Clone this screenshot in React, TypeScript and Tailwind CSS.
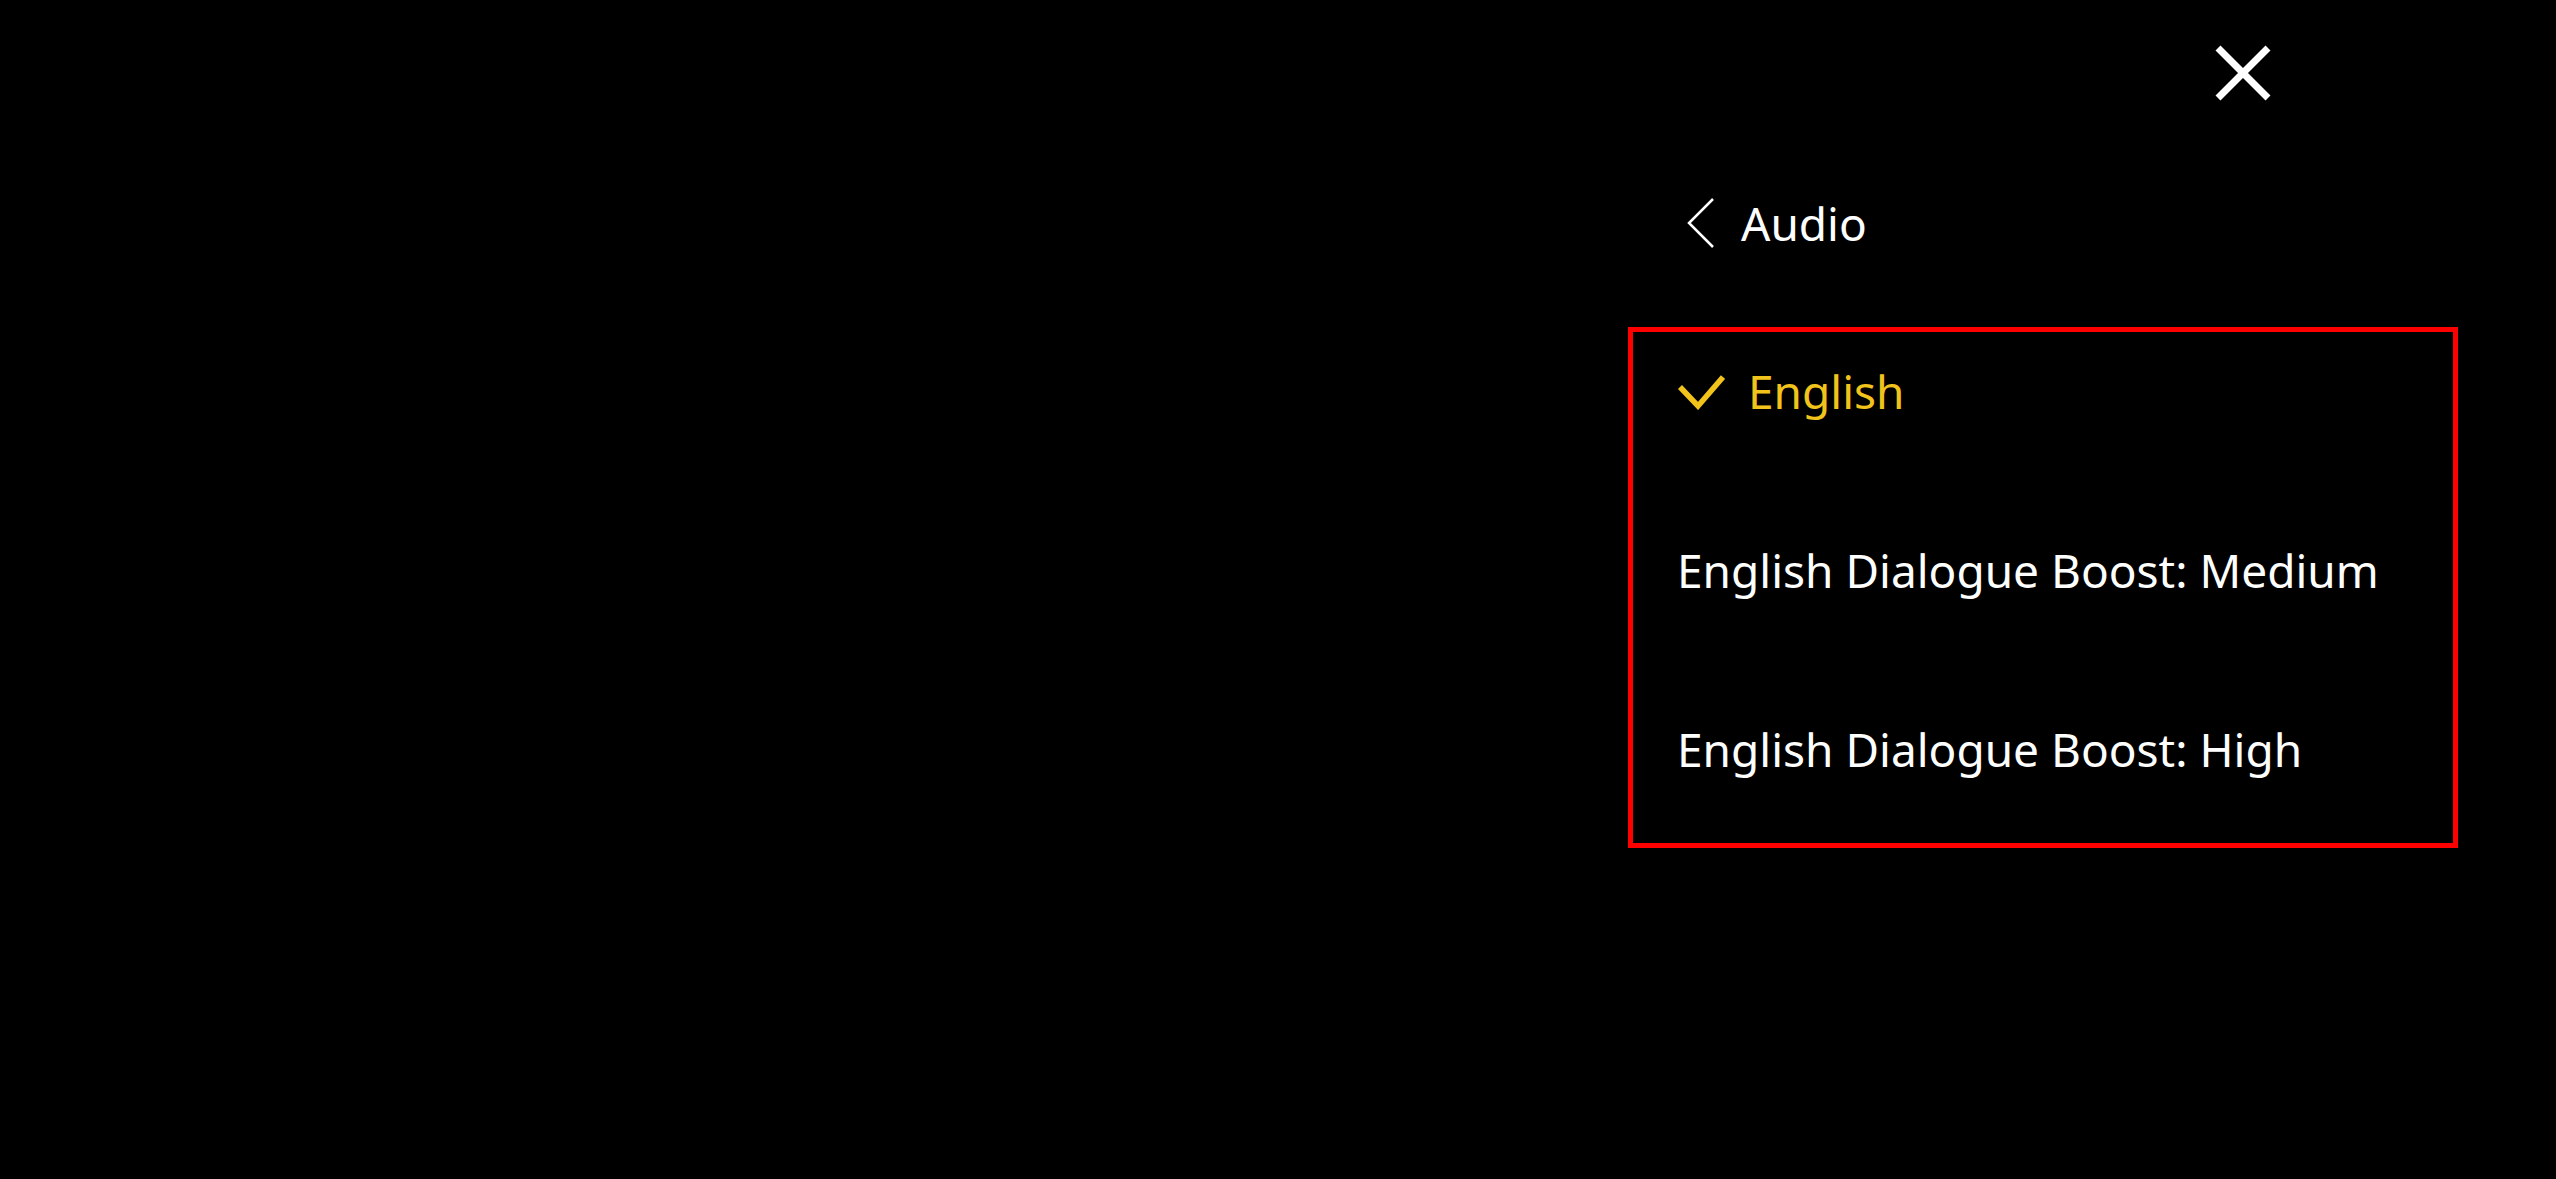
const options = [
  { label: "English", selected: true },
  { label: "English Dialogue Boost: Medium", selected: false },
  { label: "English Dialogue Boost: High", selected: false },
];

const App: React.FC = () => {
  return (
    <div
      className="w-full h-[1179px] bg-black flex justify-end overflow-hidden"
      style={{ fontFamily: '"Noto Sans", "Open Sans", sans-serif' }}
    >
      <div className="w-[830px] mr-[98px] flex flex-col">
        {/* Close button */}
        <div className="flex justify-end pr-[186px] pt-[44px]">
          <svg width="58" height="58" viewBox="0 0 58 58">
            <path d="M4 4 L54 54 M54 4 L4 54" stroke="#fff" strokeWidth="7" fill="none" />
          </svg>
        </div>

        {/* Back / title */}
        <div className="flex items-center h-[60px] mt-[91px] pl-[58px] gap-[25px]">
          <svg width="30" height="52" viewBox="0 0 30 52">
            <polyline points="27,2 3,26 27,50" stroke="#fff" strokeWidth="2.5" fill="none" />
          </svg>
          <span className="text-[46px] leading-[60px] text-white">Audio</span>
        </div>

        {/* Audio tracks */}
        <div className="mt-[74px] border-[5px] border-[#ff0000] pt-[29px] pb-[64px] pl-[44px] flex flex-col gap-[119px]">
          {options.map((opt) => (
            <div key={opt.label} className="flex items-center h-[60px]">
              {opt.selected && (
                <svg width="48" height="38" viewBox="0 0 48 38" className="mr-[23px]">
                  <polyline points="3,15 21,34 46,5" stroke="#f2c31b" strokeWidth="5.5" fill="none" />
                </svg>
              )}
              <span
                className={
                  opt.selected
                    ? "text-[46px] leading-[60px] text-[#f2c31b]"
                    : "text-[46px] leading-[60px] text-white"
                }
              >
                {opt.label}
              </span>
            </div>
          ))}
        </div>
      </div>
    </div>
  );
};

export default App;
